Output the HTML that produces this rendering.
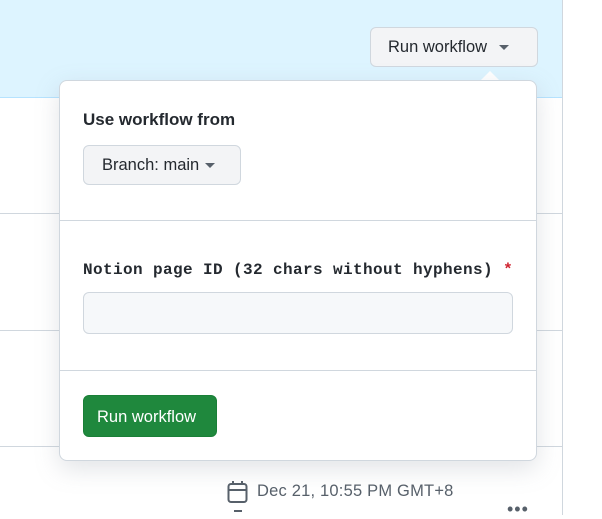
<html><head><style>
body{margin:0;width:602px;height:515px;position:relative;background:#fff;font-family:"Liberation Sans",sans-serif;overflow:hidden}
.hdr{position:absolute;left:0;top:0;width:562px;height:97px;background:#ddf4ff;border-bottom:1px solid #b6e3ff;border-right:1px solid #b6e3ff}
.rb{position:absolute;left:562px;top:0;width:1px;height:515px;background:#d0d7de}
.line{position:absolute;left:0;width:562px;height:1px;background:#d0d7de}
.btn{position:absolute;box-sizing:border-box;border:1px solid #d0d7de;border-radius:6px;background:#f3f4f6;color:#24292f;font-size:16.5px;display:flex;align-items:center}
.car{display:inline-block;width:0;height:0;border-left:5px solid transparent;border-right:5px solid transparent;border-top:5px solid #57606a;margin-left:12px}
.pop{position:absolute;left:59px;top:80px;width:478px;height:381px;box-sizing:border-box;background:#fff;border:1px solid #d0d7de;border-radius:8px;box-shadow:0 8px 24px rgba(140,149,159,.25)}
.pline{position:absolute;left:0;width:476px;height:1px;background:#d0d7de}
</style></head><body>
<div class="hdr"></div>
<div class="rb"></div>
<div class="line" style="top:213px"></div>
<div class="line" style="top:330px"></div>
<div class="line" style="top:446px"></div>
<div class="btn" style="left:370px;top:27px;width:168px;height:40px;padding-left:17px">Run workflow<span class="car"></span></div>
<div style="position:absolute;left:481px;top:71px;width:0;height:0;border-left:9px solid transparent;border-right:9px solid transparent;border-bottom:9px solid #fff"></div>
<div class="pop">
<div style="position:absolute;left:23px;top:29px;font-size:17px;font-weight:bold;color:#24292f">Use workflow from</div>
<div class="btn" style="left:23px;top:64px;width:158px;height:40px;padding-left:18px">Branch: main<span class="car" style="margin-left:6px"></span></div>
<div class="pline" style="top:139px"></div>
<div style="position:absolute;left:23px;top:180px;font-family:'Liberation Mono',monospace;font-size:16px;letter-spacing:0.4px;font-weight:bold;color:#24292f">Notion page ID (32 chars without hyphens) <span style="color:#cf222e">*</span></div>
<div style="position:absolute;left:23px;top:211px;width:430px;height:42px;box-sizing:border-box;border:1px solid #d0d7de;border-radius:6px;background:#f6f8fa"></div>
<div class="pline" style="top:289px"></div>
<div class="btn" style="left:23px;top:314px;width:134px;height:42px;padding-left:13px;padding-top:2px;background:#1f883d;border-color:#1a7f37;color:#fff">Run workflow</div>
</div>
<svg style="position:absolute;left:227px;top:480px" width="22" height="24" viewBox="0 0 22 24"><rect x="1.5" y="4" width="18" height="18" rx="2.5" fill="none" stroke="#57606a" stroke-width="2"/><line x1="1.5" y1="10" x2="19.5" y2="10" stroke="#57606a" stroke-width="2"/><line x1="6" y1="1" x2="6" y2="5" stroke="#57606a" stroke-width="2"/><line x1="15" y1="1" x2="15" y2="5" stroke="#57606a" stroke-width="2"/></svg>
<div style="position:absolute;left:257px;top:482px;font-size:16.5px;letter-spacing:0.2px;color:#57606a">Dec 21, 10:55 PM GMT+8</div>
<div style="position:absolute;left:507px;top:500px;font-size:18px;color:#57606a;letter-spacing:1px;line-height:18px">•••</div>
<div style="position:absolute;left:234px;top:510px;width:8px;height:2px;background:#57606a"></div>
</body></html>
